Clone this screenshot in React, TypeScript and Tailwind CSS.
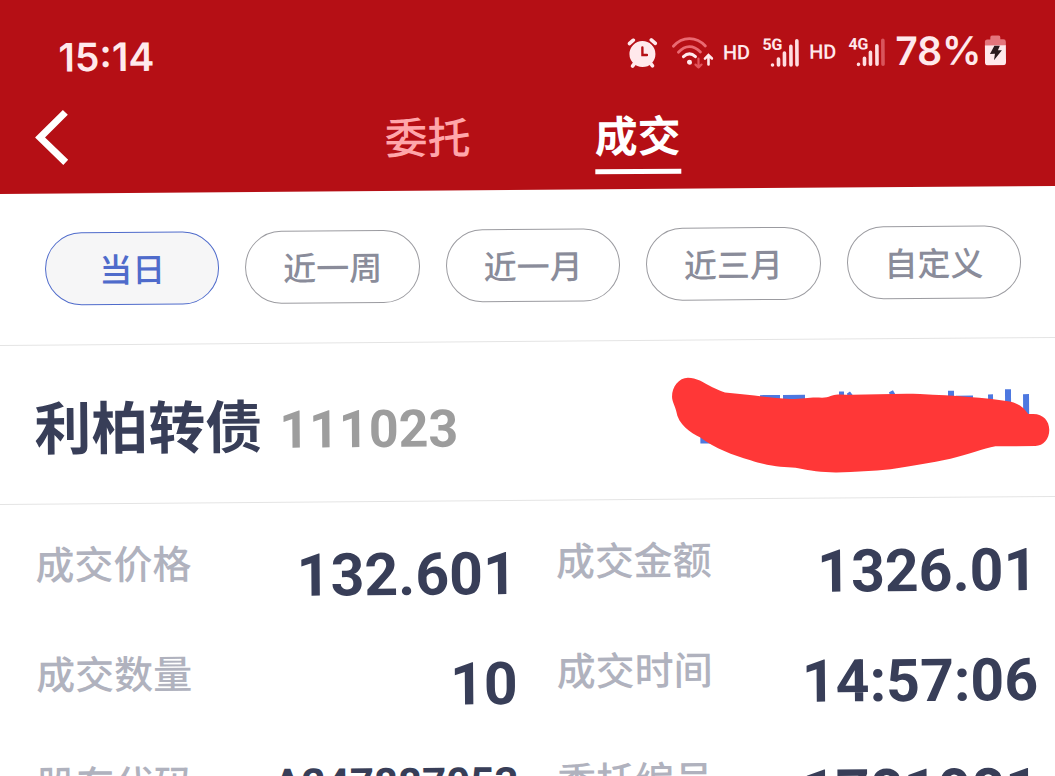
import { useState } from 'react'

const TABS = ['委托', '成交']
const RANGES = ['当日', '近一周', '近一月', '近三月', '自定义']

type Field = { label: string; value: string; small?: boolean }

const FIELDS: Field[] = [
  { label: '成交价格', value: '132.601' },
  { label: '成交金额', value: '1326.01' },
  { label: '成交数量', value: '10' },
  { label: '成交时间', value: '14:57:06' },
  { label: '股东代码', value: 'A247887053', small: true },
  { label: '委托编号', value: '1781081' },
]

function AlarmIcon() {
  return (
    <svg viewBox="0 0 30 30" className="h-[30px] w-[30px]" fill="none" strokeLinecap="round">
      <circle cx="15" cy="16" r="13" fill="#ffe9ec" />
      <path d="M2 5.500 6 2M28 5.500 24 2" stroke="#ffe9ec" strokeWidth="3.600" />
      <path d="M5 28l3-4M25 28l-3-4" stroke="#ffe9ec" strokeWidth="3.600" />
      <path d="M15 9.500v7.500h4.500" stroke="#b50f15" strokeWidth="2.400" />
    </svg>
  )
}

function WifiIcon() {
  return (
    <svg viewBox="0 0 42 32" className="h-8 w-[42px]" fill="none" strokeLinecap="round">
      <path d="M2 9.500C11-.5 25-.5 34 9.500" stroke="#ea6a72" strokeWidth="2.800" />
      <path d="M7 15.500c7-7.300 15-7.300 22 0" stroke="#ea6a72" strokeWidth="2.800" />
      <path d="M12 20c4-3.800 8-3.800 12 0" stroke="#ffe9ec" strokeWidth="3" />
      <circle cx="18" cy="25.500" r="2.500" fill="#ffe9ec" />
      <path d="M27 22v9M24 28l3 3 3-3" stroke="#e2555d" strokeWidth="2.200" />
      <path d="M37 28v-9M33.500 22l3.500-3.500 3.500 3.500" stroke="#ffe9ec" strokeWidth="2.600" />
    </svg>
  )
}

function Signal({ label, weak }: { label: string; weak?: boolean }) {
  return (
    <svg viewBox="0 0 37 34" className="h-[34px] w-[37px] overflow-visible" fill="none" stroke="#ffdde1" strokeWidth="3.600" strokeLinecap="round">
      <text x="0" y="15" fill="#ffe9ec" stroke="none" className="font-['Roboto',sans-serif] text-[16px] font-bold">
        {label}
      </text>
      <path d="M10 30v0M16 30v-6M22 30v-12M28.500 30V11.500" />
      <path d="M34.500 30V6" stroke={weak ? '#d9555c' : '#ffdde1'} />
    </svg>
  )
}

function BatteryIcon() {
  return (
    <svg viewBox="0 0 22 30" className="h-[30px] w-[22px]">
      <path d="M6 2q0-2 2-2h6q2 0 2 2v2h3q2.500 0 2.500 2.500V11h-21V6.500Q.5 4 3 4h3z" fill="#e4757c" />
      <path d="M.5 10h21v17q0 3-3 3h-15q-3 0-3-3z" fill="#ffe9ec" />
      <path d="M10 10.500h5.500L13.500 15H17.500L9.500 25l1-6.500H5.500z" fill="#2b1b1e" />
    </svg>
  )
}

function StatusBar() {
  return (
    <div className="flex items-center justify-between pr-[65px] pl-[74px] text-[#ffe9ec]">
      <span className="font-['Inter',sans-serif] text-[39px] leading-[48px] font-semibold">15:14</span>
      <div className="flex items-center font-['Roboto',sans-serif] text-[20px] font-medium">
        <AlarmIcon />
        <span className="ml-[14px]"><WifiIcon /></span>
        <span className="ml-[9px]">HD</span>
        <span className="ml-[12px]"><Signal label="5G" /></span>
        <span className="ml-[10px]">HD</span>
        <span className="ml-[12px]"><Signal label="4G" weak /></span>
        <span className="mr-[3px] ml-[10px] font-['Inter',sans-serif] text-[39px] leading-[48px] font-semibold">78%</span>
        <BatteryIcon />
      </div>
    </div>
  )
}

function NavBar() {
  const [tab, setTab] = useState('成交')

  return (
    <nav className="relative flex justify-center gap-[124px] pl-[8px]">
      <button aria-label="返回" className="absolute top-[4px] left-[50px]">
        <svg viewBox="0 0 34 56" className="h-[56px] w-[34px]" fill="none" stroke="#fff" strokeWidth="7">
          <path d="M30.500 3 5 28l25.500 25" />
        </svg>
      </button>
      {TABS.map((t) => (
        <button
          key={t}
          onClick={() => setTab(t)}
          className={
            t === tab
              ? 'border-b-[5px] border-white pb-[4px] text-[43px] leading-[64px] font-bold text-white'
              : 'border-b-[5px] border-transparent pb-[4px] text-[43px] leading-[64px] font-medium text-[#ffa6aa]'
          }
        >
          {t}
        </button>
      ))}
    </nav>
  )
}

function RangeFilter() {
  const [range, setRange] = useState('当日')

  return (
    <div className="flex gap-[26px] border-b border-[#e4e4e4] pt-[39px] pr-[52px] pb-[39px] pl-[59px]">
      {RANGES.map((r) => (
        <button
          key={r}
          onClick={() => setRange(r)}
          className={
            r === range
              ? 'h-[73px] flex-1 rounded-full border border-[#4f6bcb] bg-[#f6f6f7] text-[33px] font-medium text-[#4f6bcb]'
              : 'h-[73px] flex-1 rounded-full border border-[#9b9ba0] text-[33px] font-medium text-[#8a8c9a]'
          }
        >
          {r}
        </button>
      ))}
    </div>
  )
}

function StockHeader() {
  return (
    <div className="relative flex items-baseline border-b border-[#e4e4e4] pl-[47px]">
      <h1 className="text-[57px] leading-[158px] font-bold text-[#383e58]">利柏转债</h1>
      <span className="ml-[17px] font-['Roboto',sans-serif] text-[52px] font-bold text-[#9d9d9d]">111023</span>
      {/* Marker scribble over the action text */}
      <svg viewBox="0 0 405 130" className="absolute top-[20px] right-[19px] h-[130px] w-[405px]">
        <path
          d="M50 75h10v8H50zM110 35h20v8h-20zM133 35h22v8h-22zM189 32h5v10h-5zM197 34l3-2 6 8h-8zM239 33l4-2 5 9h-7zM298 32h6v12h-6zM306 37h17v6h-17zM338 36h5v14h-5zM355 31h6v20h-6zM373 36h6v24h-6z"
          fill="#4d78e0"
        />
        <path
          d="M38 17C29 17 22 26 22 36C22 41 25 45 26 50C28 64 40 72 50 77C65 88 82 95 100 100C120 107 133 107 145 108C160 111 172 113 186 113C205 112 222 112 240 110C262 107 280 104 300 100C318 96 333 90 345 88H385C393 88 399 81 399 72C399 63 393 56 383 56H378C374 50 369 45 358 43C335 39 305 37 270 35C240 34 215 36 190 35C183 34 180 38 172 38C160 37 155 39 140 39C120 38 98 34 75 32C68 30 57 24 50 20C46 18 42 17 38 17Z"
          fill="#ff3737"
        />
      </svg>
    </div>
  )
}

function Details() {
  return (
    <dl className="grid grid-cols-2 gap-x-[39px] gap-y-[50px] pt-[43px] pr-[38px] pl-[47px]">
      {FIELDS.map((f) => (
        <div key={f.label} className="flex h-[60px] items-start justify-between">
          <dt className="text-[39px] leading-[30px] font-medium text-[#b0b2be]">{f.label}</dt>
          <dd
            className={
              f.small
                ? "font-['Roboto',sans-serif] text-[42px] leading-[38px] font-bold text-[#383e58]"
                : "font-['Roboto',sans-serif] text-[59px] leading-[60px] font-bold text-[#383e58]"
            }
          >
            {f.value}
          </dd>
        </div>
      ))}
    </dl>
  )
}

export default function App() {
  return (
    <div className="h-screen overflow-hidden bg-white font-['Noto_Sans_CJK_SC',sans-serif]">
      {/* The whole screen sits at a slight tilt and bleeds past both sides so the corners stay covered */}
      <div className="-mx-4 origin-top-left rotate-[-0.434deg]">
        <header className="bg-[#b50f15] pt-[34px] pb-[15px]">
          <StatusBar />
          <div className="pt-[24px]">
            <NavBar />
          </div>
        </header>
        <main>
          <RangeFilter />
          <StockHeader />
          <Details />
        </main>
      </div>
    </div>
  )
}
